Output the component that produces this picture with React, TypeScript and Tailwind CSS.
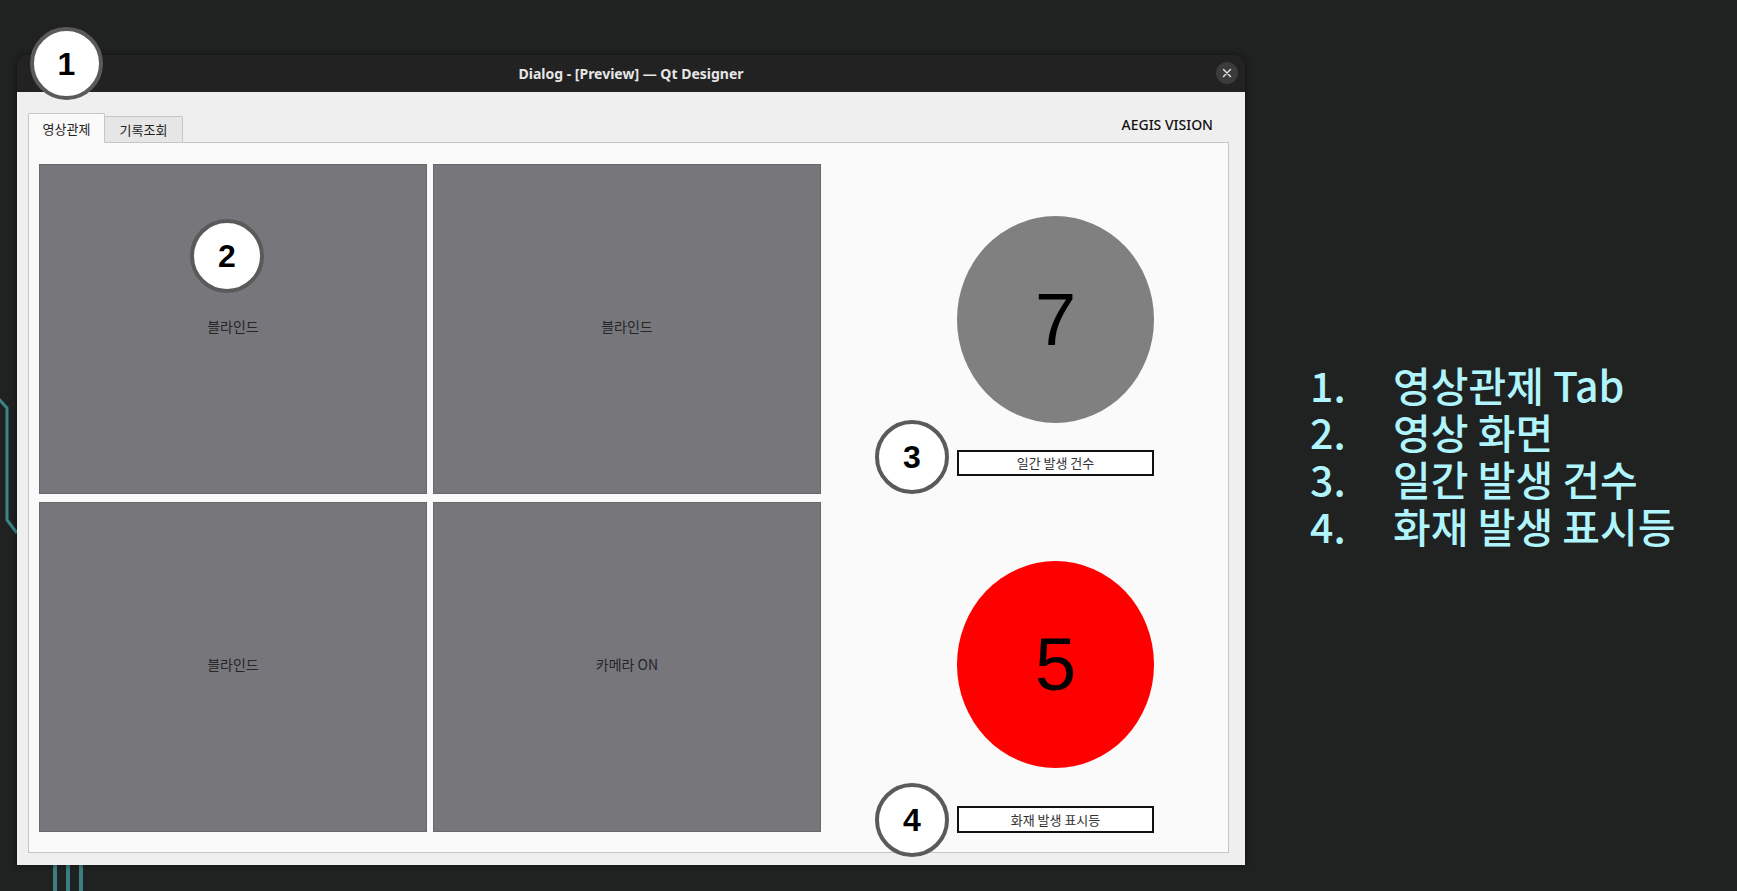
import React from "react";

const kr = { fontFamily: '"Noto Sans CJK KR", "Noto Sans", sans-serif' };

function Marker({ n, className }: { n: string; className: string }) {
  return (
    <div
      className={`absolute z-20 flex items-center justify-center rounded-full bg-white border-[4px] border-[#5a5a5a] text-[32px] font-bold text-black ${className}`}
      style={{ fontFamily: '"Liberation Sans", Arial, sans-serif' }}
    >
      {n}
    </div>
  );
}

function Video({ label }: { label: string }) {
  return (
    <div className="flex items-center justify-center pb-[6px] bg-[#77767b] border border-[#68676c] text-[14px] text-[#262626]" style={kr}>
      {label}
    </div>
  );
}

export default function App() {
  const items = ["영상관제 Tab", "영상 화면", "일간 발생 건수", "화재 발생 표시등"];
  return (
    <div className="relative w-[1737px] h-[891px] overflow-hidden bg-[#202121]">
      {/* background decorations */}
      <svg className="absolute left-0 top-0" width="1737" height="891" viewBox="0 0 1737 891">
        <polyline points="-2,398 7,408 7,520 17,533" fill="none" stroke="#3c8487" strokeWidth="3" />
        <rect x="53" y="860" width="4" height="40" fill="#3c7f81" />
        <rect x="66" y="860" width="4" height="40" fill="#3c7f81" />
        <rect x="79" y="860" width="4" height="40" fill="#3c7f81" />
      </svg>

      <div className="relative flex items-start pt-[55px] pl-[17px]">
        {/* Window */}
        <div className="w-[1228px] h-[810px] flex flex-col rounded-t-[10px] overflow-hidden shadow-[0_0_6px_rgba(0,0,0,0.5)]">
          <div className="relative h-[37px] shrink-0 bg-[#222222] flex items-center justify-center">
            <span className="text-[14px] font-bold text-[#e6e6e6]" style={{ fontFamily: '"Noto Sans", "DejaVu Sans", sans-serif' }}>
              Dialog - [Preview] — Qt Designer
            </span>
            <div className="absolute right-[7px] top-[7px] w-[22px] h-[22px] rounded-full bg-[#3b3b3b] flex items-center justify-center">
              <svg width="10" height="10" viewBox="0 0 10 10">
                <path d="M1.5 1.5 L8.5 8.5 M8.5 1.5 L1.5 8.5" stroke="#e8e8e8" strokeWidth="1.4" strokeLinecap="round" />
              </svg>
            </div>
          </div>
          <div className="flex-1 bg-[#efefef] flex flex-col pl-[11px] pr-[16px] pt-[21px] pb-[12px]">
            {/* tab row */}
            <div className="flex items-end h-[29px] relative">
              <div className="w-[77px] h-[30px] -mb-px z-10 bg-[#fafafa] border border-[#c6c6c6] border-b-0 rounded-t-[2px] flex items-center justify-center text-[13px] text-[#222]" style={kr}>
                영상관제
              </div>
              <div className="w-[78px] h-[26px] bg-[#e6e6e6] border border-[#c6c6c6] border-b-0 border-l-0 rounded-t-[2px] flex items-center justify-center text-[13px] text-[#222]" style={kr}>
                기록조회
              </div>
              <div className="flex-1" />
              <div className="self-start mt-[1px] mr-[16px] text-[14px] font-medium text-[#111]" style={{ fontFamily: '"Noto Sans", sans-serif' }}>
                AEGIS VISION
              </div>
            </div>
            {/* pane */}
            <div className="flex-1 bg-[#fafafa] border border-[#c6c6c6] flex pl-[10px] pt-[21px]">
              <div className="grid grid-cols-[388px_388px] grid-rows-[330px_330px] gap-x-[6px] gap-y-[8px]">
                <Video label="블라인드" />
                <Video label="블라인드" />
                <Video label="블라인드" />
                <Video label="카메라 ON" />
              </div>
              <div className="ml-[136px] flex flex-col w-[197px]">
                <div className="mt-[52px] h-[207px] w-[197px] rounded-[50%] bg-[#808080] flex items-center justify-center text-[74px] text-black leading-none" style={{ fontFamily: '"Liberation Sans", Arial, sans-serif' }}>
                  7
                </div>
                <div className="mt-[27px] h-[26px] border-2 border-[#111] bg-white flex items-center justify-center text-[13px] text-[#333]" style={kr}>
                  일간 발생 건수
                </div>
                <div className="mt-[85px] h-[207px] w-[197px] rounded-[50%] bg-[#ff0000] flex items-center justify-center text-[74px] text-black leading-none" style={{ fontFamily: '"Liberation Sans", Arial, sans-serif' }}>
                  5
                </div>
                <div className="mt-[38px] h-[27px] border-2 border-[#111] bg-white flex items-center justify-center text-[13px] text-[#333]" style={kr}>
                  화재 발생 표시등
                </div>
              </div>
            </div>
          </div>
        </div>

        {/* Legend */}
        <div className="ml-[65px] mt-[306px] flex flex-col text-[41px] leading-[47px] font-medium text-[#b0f4fc]" style={kr}>
          {items.map((t, i) => (
            <div key={i} className="flex">
              <span className="w-[83px]">{i + 1}.</span>
              <span>{t}</span>
            </div>
          ))}
        </div>
      </div>

      <Marker n="1" className="left-[30px] top-[27px] w-[73px] h-[73px]" />
      <Marker n="2" className="left-[190px] top-[219px] w-[74px] h-[74px]" />
      <Marker n="3" className="left-[875px] top-[420px] w-[74px] h-[74px]" />
      <Marker n="4" className="left-[875px] top-[783px] w-[74px] h-[74px]" />
    </div>
  );
}
